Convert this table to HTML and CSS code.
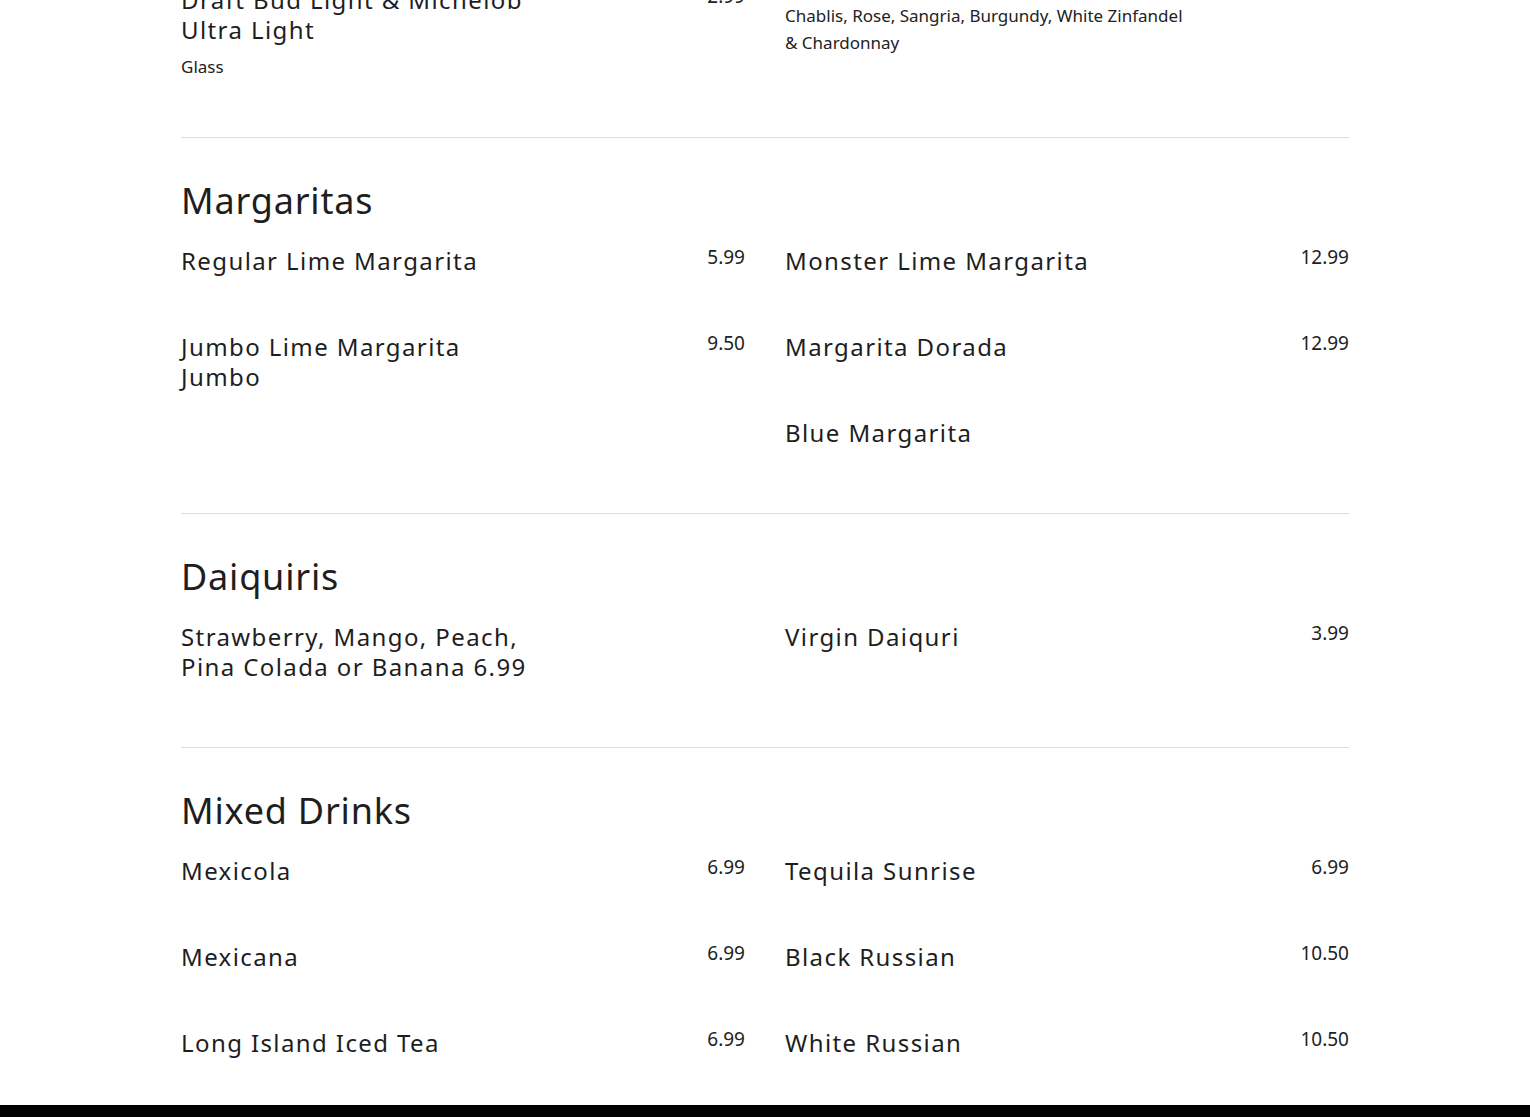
FILE: index.html
```html
<!DOCTYPE html>
<html lang="en">
<head>
<meta charset="utf-8">
<title>Drinks Menu</title>
<link rel="stylesheet" href="styles.css">
</head>
<body>
<main class="menu">
  <section class="section section--first">
    <div class="cols">
      <div class="col">
        <div class="item">
          <div class="item-main">
            <h3 class="name">Draft Bud Light &amp; Michelob Ultra Light</h3>
            <p class="desc">Glass</p>
          </div>
          <span class="price">2.99</span>
        </div>
      </div>
      <div class="col col--raised">
        <div class="item">
          <div class="item-main">
            <h3 class="name">House Wine</h3>
            <p class="desc desc--wide">Chablis, Rose, Sangria, Burgundy, White Zinfandel &amp; Chardonnay</p>
          </div>
          <span class="price">4.99</span>
        </div>
      </div>
    </div>
  </section>

  <section class="section">
    <h2 class="heading">Margaritas</h2>
    <div class="cols">
      <div class="col">
        <div class="item">
          <div class="item-main"><h3 class="name">Regular Lime Margarita</h3></div>
          <span class="price">5.99</span>
        </div>
        <div class="item">
          <div class="item-main"><h3 class="name">Jumbo Lime Margarita Jumbo</h3></div>
          <span class="price">9.50</span>
        </div>
      </div>
      <div class="col">
        <div class="item">
          <div class="item-main"><h3 class="name">Monster Lime Margarita</h3></div>
          <span class="price">12.99</span>
        </div>
        <div class="item">
          <div class="item-main"><h3 class="name">Margarita Dorada</h3></div>
          <span class="price">12.99</span>
        </div>
        <div class="item">
          <div class="item-main"><h3 class="name">Blue Margarita</h3></div>
          <span class="price"></span>
        </div>
      </div>
    </div>
  </section>

  <section class="section">
    <h2 class="heading">Daiquiris</h2>
    <div class="cols">
      <div class="col">
        <div class="item">
          <div class="item-main"><h3 class="name">Strawberry, Mango, Peach, Pina Colada or Banana 6.99</h3></div>
          <span class="price"></span>
        </div>
      </div>
      <div class="col">
        <div class="item">
          <div class="item-main"><h3 class="name">Virgin Daiquri</h3></div>
          <span class="price">3.99</span>
        </div>
      </div>
    </div>
  </section>

  <section class="section section--last">
    <h2 class="heading">Mixed Drinks</h2>
    <div class="cols">
      <div class="col">
        <div class="item">
          <div class="item-main"><h3 class="name">Mexicola</h3></div>
          <span class="price">6.99</span>
        </div>
        <div class="item">
          <div class="item-main"><h3 class="name">Mexicana</h3></div>
          <span class="price">6.99</span>
        </div>
        <div class="item">
          <div class="item-main"><h3 class="name">Long Island Iced Tea</h3></div>
          <span class="price">6.99</span>
        </div>
      </div>
      <div class="col">
        <div class="item">
          <div class="item-main"><h3 class="name">Tequila Sunrise</h3></div>
          <span class="price">6.99</span>
        </div>
        <div class="item">
          <div class="item-main"><h3 class="name">Black Russian</h3></div>
          <span class="price">10.50</span>
        </div>
        <div class="item">
          <div class="item-main"><h3 class="name">White Russian</h3></div>
          <span class="price">10.50</span>
        </div>
      </div>
    </div>
  </section>
</main>
<footer class="footer"></footer>
</body>
</html>
```
FILE: styles.css
```css
html, body {
  margin: 0;
  padding: 0;
  background: #fff;
  color: #222;
  font-family: "Noto Sans", "Open Sans", "DejaVu Sans", sans-serif;
}

body {
  overflow: hidden;
}

.menu {
  width: 1168px;
  margin: -15px auto 0;
}

.section {
  border-bottom: 1px solid #dedede;
  padding-bottom: 9px;
}

.section--first {
  padding-bottom: 1px;
}

.section--last {
  border-bottom: none;
  padding-bottom: 0;
}

.heading {
  margin: 0 0 23px;
  padding-top: 41px;
  font-size: 36px;
  line-height: 44px;
  font-weight: 400;
  letter-spacing: 0.8px;
  color: #1e1e1e;
}

.cols {
  display: flex;
  gap: 40px;
}

.col {
  flex: 1 1 0;
  min-width: 0;
}

.col--raised {
  margin-top: -21px;
}

.item {
  display: flex;
  justify-content: space-between;
  align-items: flex-start;
  margin-bottom: 56px;
}

.item-main {
  width: 356px;
}

.name {
  margin: 0;
  font-size: 24px;
  line-height: 30px;
  font-weight: 400;
  letter-spacing: 1.4px;
  color: #1e1e1e;
}

.desc {
  margin: 8px 0 0;
  font-size: 17px;
  line-height: 27px;
  color: #222;
}

.desc--wide {
  width: 410px;
}

.price {
  font-size: 19px;
  line-height: 24px;
  margin-top: -1px;
  color: #222;
}

.footer {
  position: fixed;
  left: 0;
  right: 0;
  bottom: 0;
  height: 12px;
  background: #000;
}
```
